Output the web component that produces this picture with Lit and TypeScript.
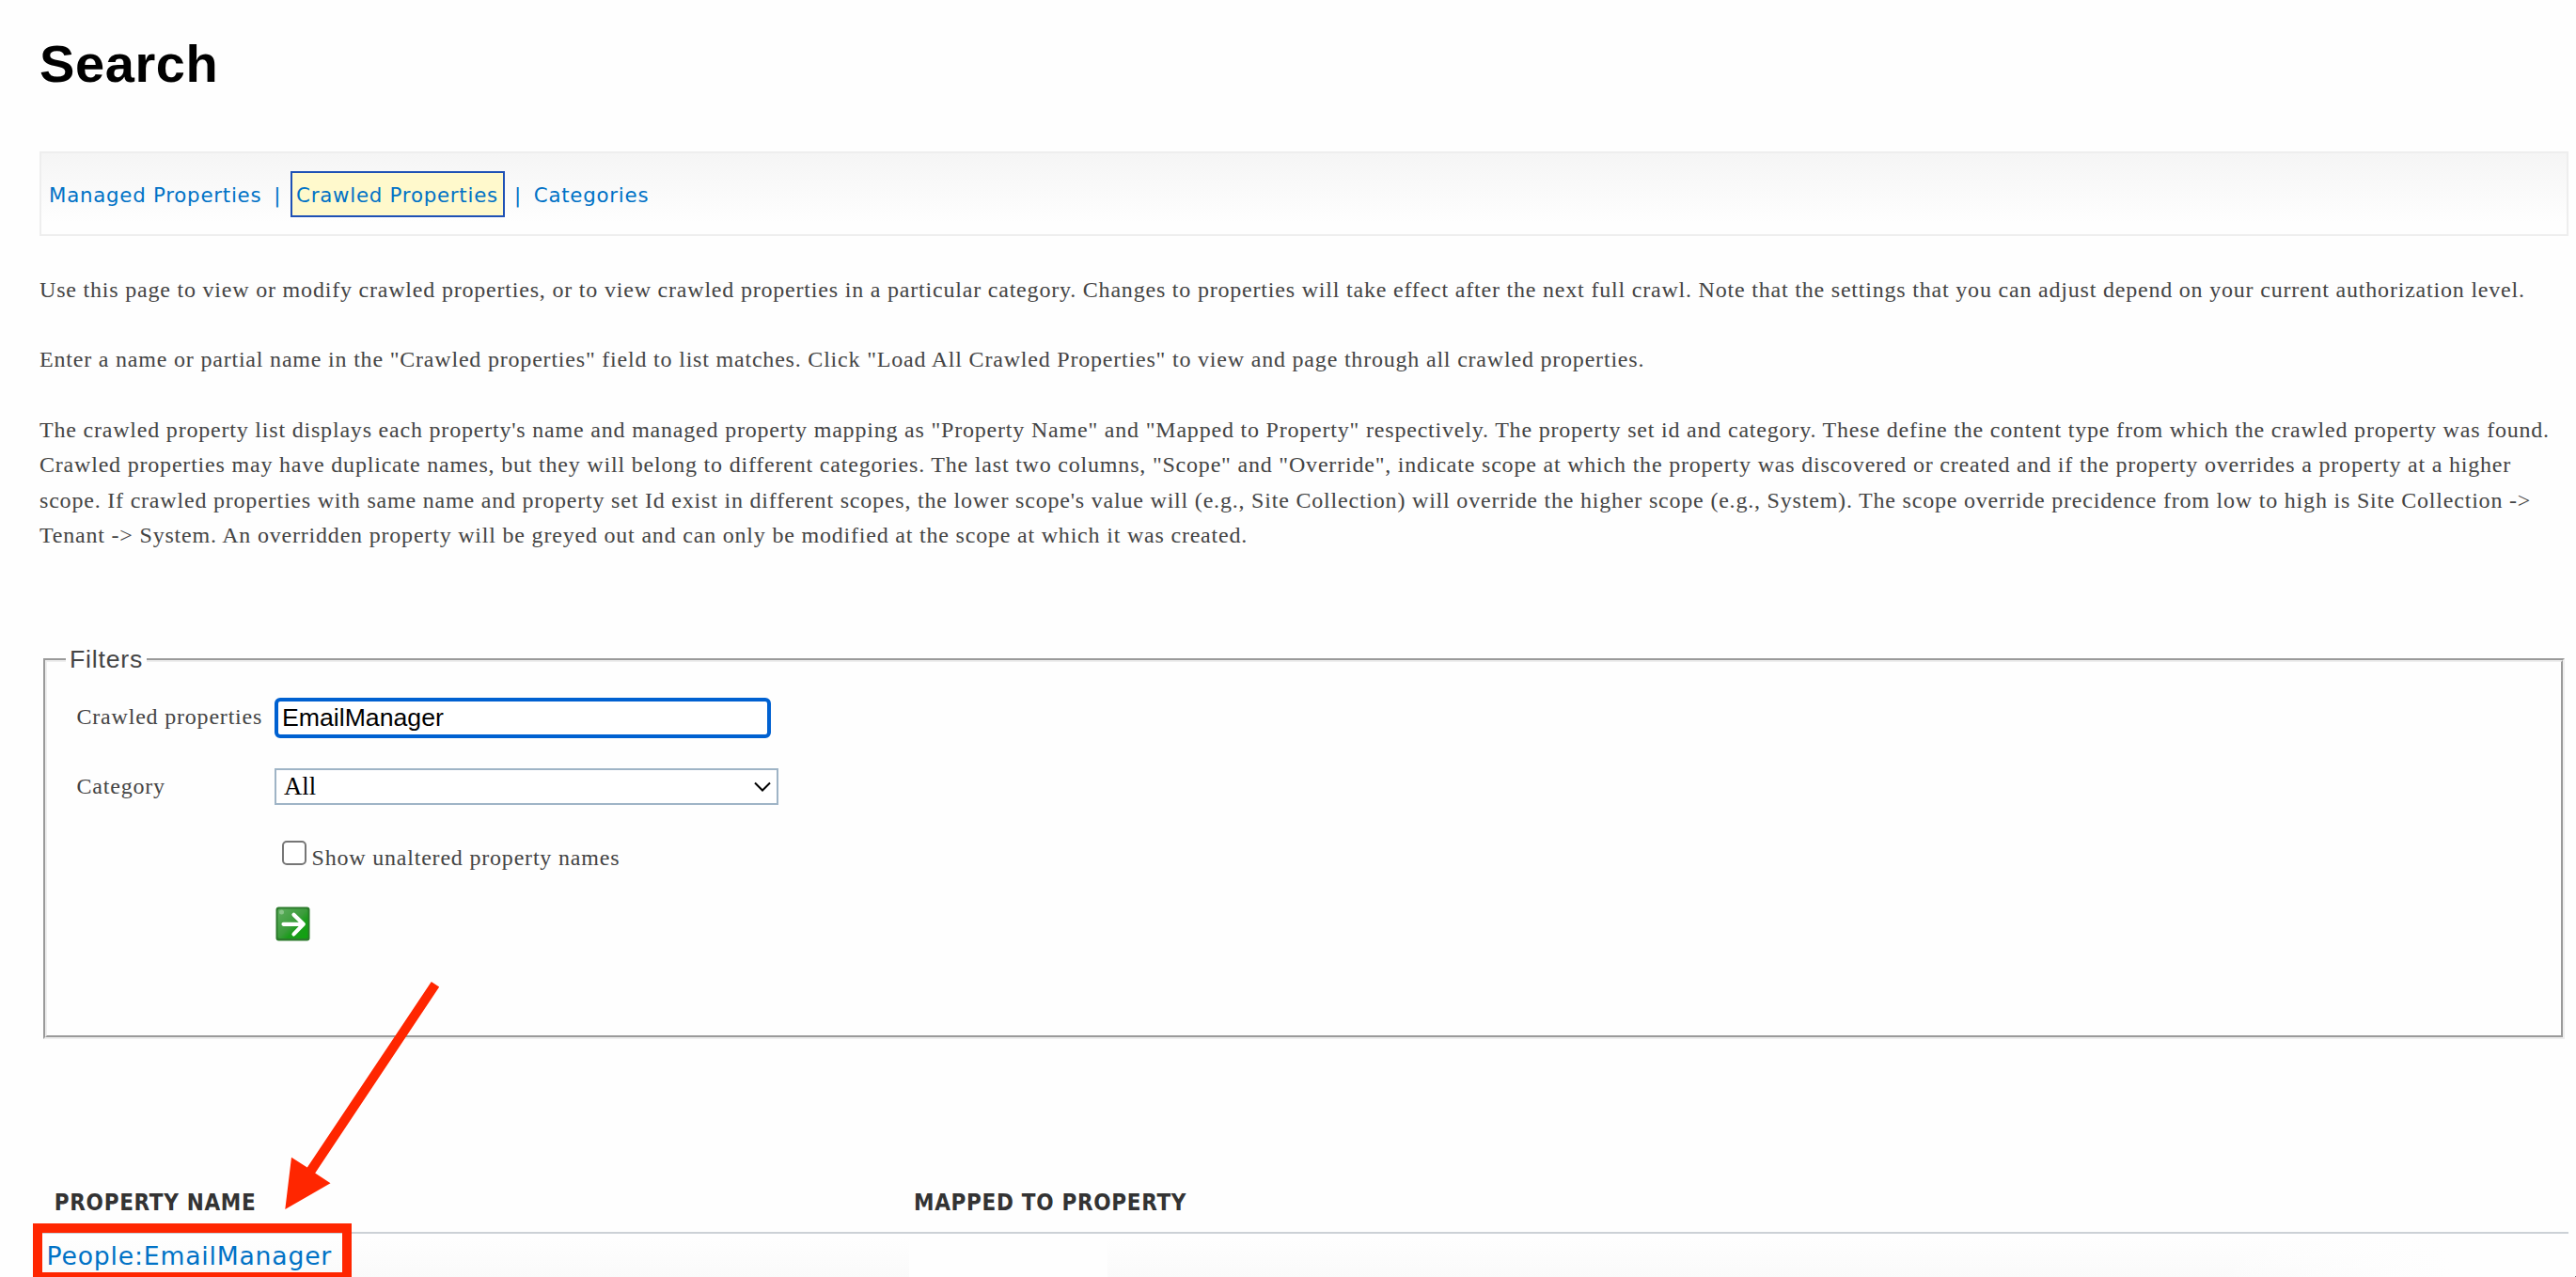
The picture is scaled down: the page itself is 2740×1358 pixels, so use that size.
import { html, css, svg, LitElement } from 'lit'

const navItems = [
	{ label: 'Managed Properties', selected: false },
	{ label: 'Crawled Properties', selected: true },
	{ label: 'Categories', selected: false },
]

const goIcon = svg`
	<defs>
		<linearGradient id="go" x1="0" y1="0" x2="1" y2="1">
			<stop offset="0" stop-color="#5fae5f" />
			<stop offset="0.5" stop-color="#3b9c3b" />
			<stop offset="0.65" stop-color="#1b9c1b" />
			<stop offset="1" stop-color="#0fa30f" />
		</linearGradient>
	</defs>
	<rect x="0.5" y="0.5" width="36" height="36" rx="3" fill="#2b7a2b" />
	<rect x="2.5" y="2.5" width="32" height="31.5" rx="2" fill="url(#go)" />
	<circle cx="6.5" cy="6" r="2.5" fill="#9ccf9c" opacity="0.7" />
	<path d="M8.5 18.8H29M19.5 8.8L29.8 18.8L19.5 29.4" fill="none" stroke="#fff" stroke-width="4.2" stroke-linecap="round" stroke-linejoin="round" />
`

export class FilterPanel extends LitElement {
	static properties = {
		query: { type: String },
		category: { type: String },
	}

	declare query: string
	declare category: string

	constructor() {
		super()
		this.query = ''
		this.category = 'All'
	}

	static styles = css`
		:host {
			display: block;
		}

		.frame {
			box-sizing: border-box;
			height: 405px;
			border: 2px solid;
			border-color: #9a9a9a #eeeeee #eeeeee #9a9a9a;
		}

		.frame-inner {
			box-sizing: border-box;
			height: 401px;
			border: 2px solid;
			border-color: #eeeeee #9a9a9a #9a9a9a #eeeeee;
			padding-left: 31.5px;
		}

		.legend {
			width: fit-content;
			box-sizing: border-box;
			min-width: 86px;
			height: 30px;
			margin: -18px 0 26px -11.5px;
			padding-left: 4px;
			background: #fefefe;
			font: 26.67px/31px 'Liberation Sans', Arial, sans-serif;
			letter-spacing: 0.8px;
		}

		.row {
			display: grid;
			grid-template-columns: 210.5px auto;
			justify-content: start;
			align-items: center;
		}

		.label {
			line-height: 37px;
			margin-top: -2px;
		}

		.text-field {
			box-sizing: border-box;
			width: 528px;
			height: 43px;
			border: 4px solid #0061d1;
			border-radius: 6px;
			padding: 0 0 2px 4px;
			background: #fff;
			color: #000;
			font: 26.67px/34px 'Liberation Sans', Arial, sans-serif;
			letter-spacing: 0;
		}

		.select {
			display: flex;
			align-items: center;
			justify-content: space-between;
			box-sizing: border-box;
			width: 536px;
			height: 39px;
			margin-top: 32px;
			border: 2px solid #9fb4c6;
			padding: 0 6px 0 8px;
			background: #fff;
			color: #000;
			font: 26.67px/34px 'Liberation Serif', 'Times New Roman', serif;
			letter-spacing: 0;
		}

		.category .label {
			margin-top: 32px;
		}

		.chevron {
			display: block;
			width: 18px;
			height: 11px;
		}

		.check {
			display: flex;
			align-items: flex-start;
			margin: 38px 0 0 218.5px;
		}

		.box {
			box-sizing: border-box;
			width: 26px;
			height: 26px;
			border: 2px solid #767676;
			border-radius: 5px;
			background: #fff;
		}

		.check-label {
			margin-left: 5.5px;
			line-height: 36px;
		}

		.go {
			display: block;
			width: 37px;
			height: 37px;
			margin: 34px 0 0 211.5px;
		}
	`

	render() {
		return html`
			<div class="frame">
				<div class="frame-inner">
					<div class="legend">Filters</div>
					<div class="row">
						<span class="label">Crawled properties</span>
						<div class="text-field">${this.query}</div>
					</div>
					<div class="row category">
						<span class="label">Category</span>
						<div class="select">
							<span>${this.category}</span>
							<svg class="chevron" viewBox="0 0 18 11">
								<path d="M1 1.5L9 9.5L17 1.5" fill="none" stroke="#000" stroke-width="2" />
							</svg>
						</div>
					</div>
					<div class="check">
						<span class="box"></span>
						<span class="check-label">Show unaltered property names</span>
					</div>
					<svg class="go" viewBox="0 0 37 37">${goIcon}</svg>
				</div>
			</div>
		`
	}
}

export class AppRoot extends LitElement {
	static styles = css`
		:host {
			display: block;
			position: relative;
			box-sizing: border-box;
			width: 2740px;
			height: 1358px;
			padding: 36px 8px 0 42px;
			overflow: hidden;
			background: #fefefe;
			color: #444;
			font: 24px/37.33px 'Liberation Serif', 'Times New Roman', serif;
			letter-spacing: 0.8px;
		}

		.title {
			margin: 0 0 61px;
			color: #000;
			font: bold 56px/64px 'Liberation Sans', Arial, sans-serif;
			letter-spacing: 0.6px;
		}

		.nav {
			display: flex;
			align-items: flex-start;
			box-sizing: border-box;
			height: 90px;
			border: 2px solid #eeeeee;
			padding: 19px 0 0 8px;
			background: linear-gradient(#f5f5f5, #fefefe 85%);
			color: #0072c6;
			font: 21.33px/27px 'DejaVu Sans', Verdana, sans-serif;
			letter-spacing: 0.75px;
		}

		.nav-item {
			border: 2px solid transparent;
			border-width: 2px 0;
			padding: 10px 0 8px;
			white-space: nowrap;
		}

		.nav-item.selected {
			box-sizing: border-box;
			width: 228px;
			margin: 0 -3px;
			border: 2px solid #1f51b5;
			padding-left: 4px;
			background: #fff9cc;
		}

		.divider {
			margin: 0 12.8px 0 13px;
			padding: 12px 0;
		}

		.intro {
			margin-top: 38.6px;
			white-space: nowrap;
		}

		.intro p {
			margin: 0 0 37.33px;
		}

		.filters {
			margin: 111.7px 4px 0;
		}

		.results {
			margin-top: 155px;
		}

		.head,
		.result {
			display: grid;
			grid-template-columns: 925px 1fr;
		}

		.head {
			box-sizing: border-box;
			height: 52px;
			border-bottom: 2px solid #ccd1d6;
			padding-top: 4.7px;
			color: #333;
			font: bold 24px/28px 'DejaVu Sans Condensed', 'DejaVu Sans', Tahoma, sans-serif;
			letter-spacing: 0.68px;
		}

		.head span:first-child {
			padding-left: 15.8px;
		}

		.head span:last-child {
			padding-left: 5px;
		}

		.result {
			height: 48px;
			color: #0072c6;
			font: 26.67px/48px 'DejaVu Sans', Verdana, sans-serif;
			letter-spacing: 0.8px;
		}

		.name {
			padding-left: 7.6px;
			background: linear-gradient(#fefefe 10%, #fafafa);
		}

		.mapped {
			margin-left: 211px;
			background: linear-gradient(90deg, transparent 75%, #fefefe 92%), linear-gradient(#fefefe 10%, #fafafa);
		}

		.marks {
			position: absolute;
			left: 0;
			top: 0;
			width: 2740px;
			height: 1358px;
		}
	`

	render() {
		return html`
			<h1 class="title">Search</h1>
			<div class="nav">
				${navItems.map(
					(item, i) => html`
						${i > 0 ? html`<span class="divider">|</span>` : ''}
						<span class="nav-item ${item.selected ? 'selected' : ''}">${item.label}</span>
					`
				)}
			</div>
			<div class="intro">
				<p>
					Use this page to view or modify crawled properties, or to view crawled properties in a particular category. Changes to properties will take effect after the next full crawl. Note that the settings that you can adjust depend on your current authorization level.
				</p>
				<p>
					Enter a name or partial name in the "Crawled properties" field to list matches. Click "Load All Crawled Properties" to view and page through all crawled properties.
				</p>
				<p>
					The crawled property list displays each property's name and managed property mapping as "Property Name" and "Mapped to Property" respectively. The property set id and category. These define the content type from which the crawled property was found.<br />
					Crawled properties may have duplicate names, but they will belong to different categories. The last two columns, "Scope" and "Override", indicate scope at which the property was discovered or created and if the property overrides a property at a higher<br />
					scope. If crawled properties with same name and property set Id exist in different scopes, the lower scope's value will (e.g., Site Collection) will override the higher scope (e.g., System). The scope override precidence from low to high is Site Collection -><br />
					Tenant -> System. An overridden property will be greyed out and can only be modified at the scope at which it was created.
				</p>
			</div>
			<filter-panel class="filters" query="EmailManager" category="All"></filter-panel>
			<div class="results">
				<div class="head">
					<span>PROPERTY NAME</span>
					<span>MAPPED TO PROPERTY</span>
				</div>
				<div class="result">
					<span class="name">People:EmailManager</span>
					<span class="mapped"></span>
				</div>
			</div>
			<svg class="marks" viewBox="0 0 2740 1358">
				<path d="M458.8 1044L467.2 1049.5L335.2 1247.5L351.5 1258.3L303.3 1286L310 1230.8L326.8 1241.5Z" fill="#ff2600" />
				<path d="M35 1301H374V1358H35ZM45 1311V1353H364V1311Z" fill="#ff2600" fill-rule="evenodd" />
				<rect x="2739" y="1357" width="1" height="1" fill="#777" />
			</svg>
		`
	}
}

window.customElements.define('filter-panel', FilterPanel)
window.customElements.define('app-root', AppRoot)
